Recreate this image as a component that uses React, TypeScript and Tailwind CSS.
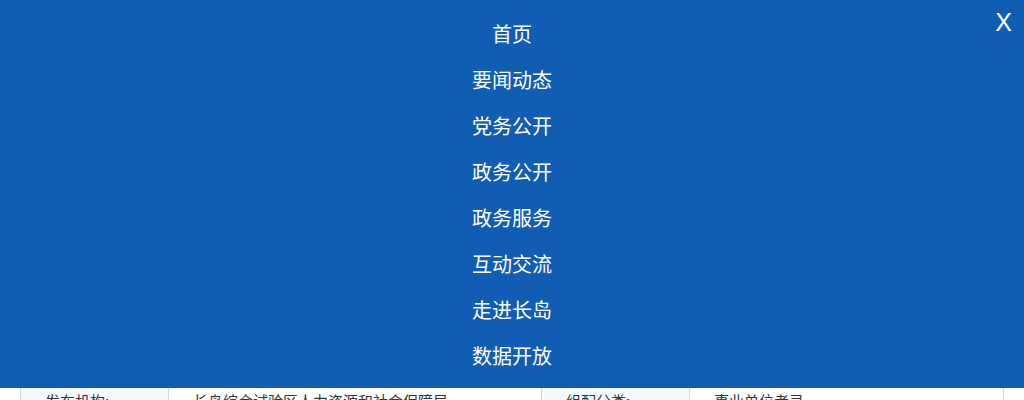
import React from 'react'

const menu = ['首页', '要闻动态', '党务公开', '政务公开', '政务服务', '互动交流', '走进长岛', '数据开放']

const font = { fontFamily: '"Noto Sans CJK SC", "Noto Sans", sans-serif' }

export default function App() {
  return (
    <div className="relative min-h-[400px] bg-white" style={font}>
      {/* page behind the menu */}
      <div className="h-[378px]" />
      <div className="mx-[20px]">
        <table className="w-full border-collapse text-[15px] text-[#333]">
          <tbody>
            <tr>
              <td className="w-[148px] border border-[#d6d6d6] bg-[#f5faff] py-[10px] pl-[24px] leading-6">发布机构:</td>
              <td className="w-[373px] border border-[#d6d6d6] py-[10px] pl-[24px] leading-6">长岛综合试验区人力资源和社会保障局</td>
              <td className="w-[148px] border border-[#d6d6d6] bg-[#f5faff] py-[10px] pl-[24px] leading-6">组配分类:</td>
              <td className="border border-[#d6d6d6] py-[10px] pl-[24px] leading-6">事业单位考录</td>
            </tr>
            <tr>
              <td className="border border-[#d6d6d6] bg-[#f5faff] py-[10px] pl-[24px] leading-6">发布日期:</td>
              <td className="border border-[#d6d6d6] py-[10px] pl-[24px] leading-6">2023-05-10</td>
              <td className="border border-[#d6d6d6] bg-[#f5faff] py-[10px] pl-[24px] leading-6">文号:</td>
              <td className="border border-[#d6d6d6] py-[10px] pl-[24px] leading-6"></td>
            </tr>
          </tbody>
        </table>
      </div>

      {/* mobile nav overlay */}
      <div className="absolute inset-x-0 top-0 z-10 h-[388px] bg-[#105db3]">
        <button
          type="button"
          className="absolute right-[12px] top-[6px] text-[25px] leading-8 text-white"
          style={{ fontFamily: '"Liberation Sans", Arial, sans-serif' }}
          aria-label="关闭菜单"
        >
          X
        </button>
        <ul className="flex flex-col items-center pt-[11px]">
          {menu.map((item) => (
            <li key={item}>
              <a href="#" className="block text-[20px] leading-[46px] text-white">
                {item}
              </a>
            </li>
          ))}
        </ul>
      </div>
    </div>
  )
}
